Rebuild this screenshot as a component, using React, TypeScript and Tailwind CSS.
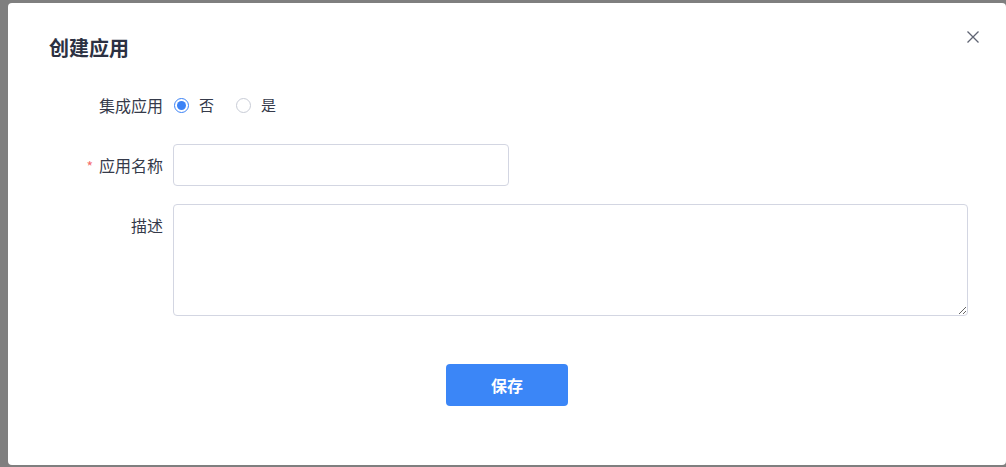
import { useState } from "react"

const font = { fontFamily: '"Noto Sans CJK SC", "Noto Sans", sans-serif' }

const Radio = ({ checked, label, onClick }: { checked: boolean, label: string, onClick: () => void }) => (
    <label className="flex items-center gap-[10px] cursor-pointer" onClick={onClick}>
        <span className={`w-[15px] h-[15px] rounded-full border flex items-center justify-center ${checked ? 'border-[#3b82f6]' : 'border-[#c8ccd6]'}`}>
            {checked && <span className="w-[9px] h-[9px] rounded-full bg-[#3b82f6]" />}
        </span>
        <span className="text-[15px] text-[#353a4a]">{label}</span>
    </label>
)

const App = () => {
    const [integrated, setIntegrated] = useState(false)

    return (
        <div className="w-[1006px] h-[467px] bg-[#7f7f7f] overflow-hidden pl-[8px] pt-[3px]" style={font}>
            <div className="relative w-[998px] h-[462px] bg-white rounded-[4px]">
                <button className="absolute top-[28px] right-[27px] w-[12px] h-[12px] text-[#5f6473]">
                    <svg viewBox="0 0 12 12" width="12" height="12" fill="none" stroke="currentColor" strokeWidth="1.3">
                        <path d="M0.5 0.5L11.5 11.5M11.5 0.5L0.5 11.5" />
                    </svg>
                </button>

                <div className="pt-[31px] pl-[41px] text-[20px] leading-[28px] font-bold text-[#2c3142]">创建应用</div>

                <div className="mt-[22px] flex flex-col gap-[18px] pr-[38px]">
                    <div className="flex items-center h-[42px]">
                        <div className="w-[155px] text-right text-[16px] text-[#353a4a]">集成应用</div>
                        <div className="ml-[11px] flex items-center gap-[22px]">
                            <Radio checked={!integrated} label="否" onClick={() => setIntegrated(false)} />
                            <Radio checked={integrated} label="是" onClick={() => setIntegrated(true)} />
                        </div>
                    </div>

                    <div className="flex items-center h-[42px]">
                        <div className="w-[155px] text-right text-[16px] text-[#353a4a]">
                            <span className="text-[#f56c6c] text-[14px] mr-[6px]">*</span>应用名称
                        </div>
                        <input className="ml-[10px] w-[336px] h-[42px] border border-[#d3d6e2] rounded-[4px] px-3 text-[14px] outline-none" />
                    </div>

                    <div className="flex items-start">
                        <div className="w-[155px] text-right text-[16px] leading-[42px] text-[#353a4a]">描述</div>
                        <textarea className="ml-[10px] flex-1 h-[112px] border border-[#d3d6e2] rounded-[4px] px-3 py-2 text-[14px] outline-none" />
                    </div>
                </div>

                <div className="mt-[48px] flex justify-center">
                    <button className="w-[122px] h-[42px] rounded-[4px] bg-[#3b86f7] text-white text-[16px] font-bold">保存</button>
                </div>
            </div>
        </div>
    )
}

export default App
